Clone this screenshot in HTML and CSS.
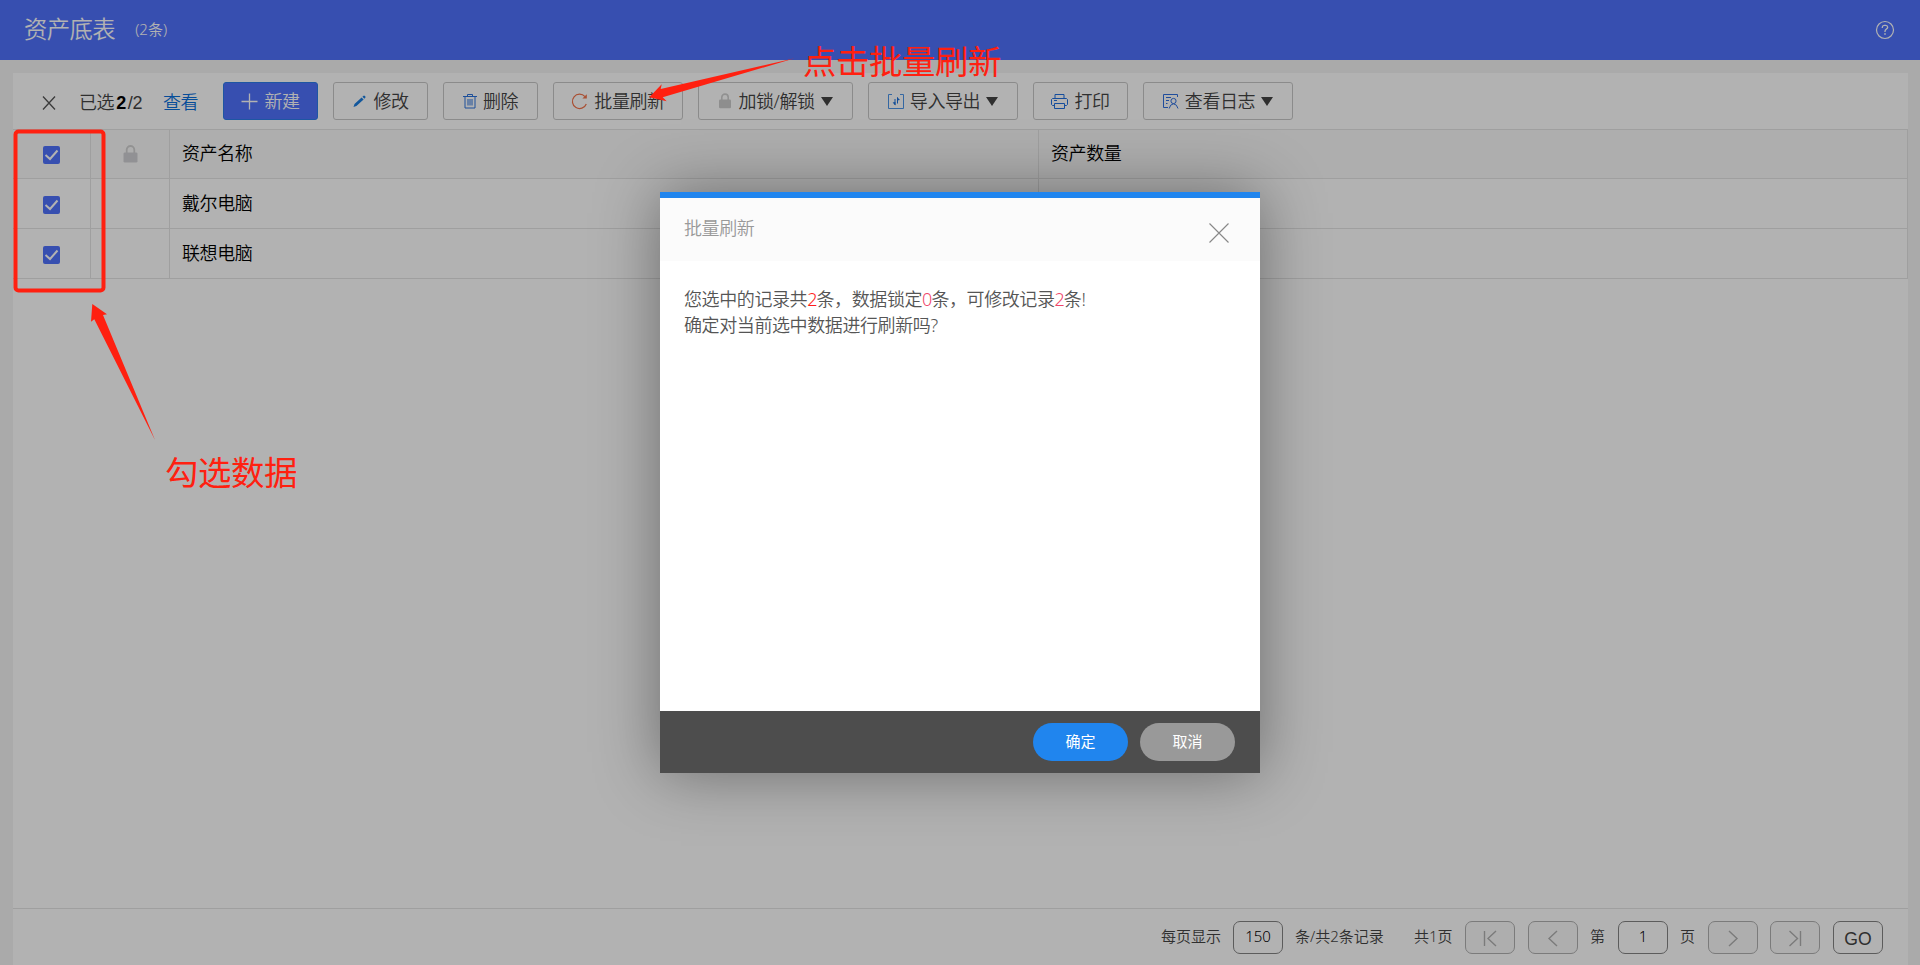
FILE: index.html
```html
<!DOCTYPE html>
<html lang="zh-CN">
<head>
    <meta charset="UTF-8">
    <meta name="viewport" content="width=device-width, initial-scale=1.0">
    <title>资产底表</title>
    <link rel="stylesheet" href="styles.css">
</head>
<body>
    <div class="page">
        <div class="header">
            <span class="title">资产底表</span>
            <span class="count">(2条)</span>
            <svg class="help" width="20" height="20" viewBox="0 0 20 20" fill="none" stroke="#fff">
                <circle cx="10" cy="10" r="8.5" stroke-width="1.2"/>
                <path d="M7.3 8V7.2A2 2 0 0 1 9.3 5.3H10.7A2 2 0 0 1 12.7 7.2C12.7 9 10 9.2 10 11.3V12" stroke-width="1.3"/>
                <path d="M10 13.2V14.8" stroke-width="1.6"/>
            </svg>
        </div>
        <div class="panel">
            <div class="toolbar">
                <svg class="clear" width="14" height="14" viewBox="0 0 14 14" fill="none" stroke="#555" stroke-width="1.3"><path d="M1 .5L13 13.5M13 .5L1 13.5"/></svg>
                <span class="selected">已选<b>2</b>/2</span>
                <a class="view">查看</a>
                <button class="btn btn-primary">
                    <svg width="17" height="17" viewBox="0 0 17 17" fill="none" stroke="#fff" stroke-width="1.3"><path d="M8.5 .5V16.5M.5 8.5H16.5"/></svg>
                    <span>新建</span>
                </button>
                <button class="btn">
                    <svg width="15" height="14" viewBox="0 0 15 14" fill="#1a7de0"><path d="M1.5 13L2.5 10L9.6 3.5L11.6 5.5L4.4 12ZM10.4 2.8L11.6 1.8Q12.2 1.4 12.8 1.9L13.4 2.5Q13.8 3 13.4 3.6L12.4 4.7Z"/></svg>
                    <span>修改</span>
                </button>
                <button class="btn">
                    <svg width="14" height="16" viewBox="0 0 14 16" fill="none" stroke="#2b73dd"><path d="M0 3.5H14M4.5 3.5V1.5H9.5V3.5M2 3.5V15H12V3.5M5 6V12.5M7 6V12.5M9 6V12.5"/></svg>
                    <span>删除</span>
                </button>
                <button class="btn btn-wide">
                    <svg width="17" height="17" viewBox="0 0 17 17" fill="none" stroke="#f3734a" stroke-width="1.2"><path d="M14 3.6A7.2 7.2 0 1 0 15.3 11"/><path d="M15.8 1.2V5.6H11.4Z" fill="#f3734a" stroke="none"/></svg>
                    <span>批量刷新</span>
                </button>
                <button class="btn btn-lock">
                    <svg width="14" height="16" viewBox="0 0 14 16"><path d="M3.8 7V4.3A3.2 3.2 0 0 1 10.2 4.3V7" fill="none" stroke="#d0d0d0" stroke-width="1.6"/><rect x="1" y="6.5" width="12" height="8.7" rx="1.2" fill="#ccc"/></svg>
                    <span>加锁/解锁</span>
                    <i class="caret"></i>
                </button>
                <button class="btn btn-menu">
                    <svg width="16" height="16" viewBox="0 0 16 16" fill="none" stroke="#4b94e8"><path d="M4 1.5H.5V15.5H4M12 1.5H15.5V15.5H12M4 15.5H12"/><path d="M7 12V6M9.5 4.5V10.5" stroke="#1a6fd8"/><path d="M7.4 12.5V9L4.6 9.5ZM9.1 4V7.5L12 7Z" fill="#1a6fd8" stroke="none"/></svg>
                    <span>导入导出</span>
                    <i class="caret"></i>
                </button>
                <button class="btn">
                    <svg width="17" height="17" viewBox="0 0 17 17" fill="none" stroke="#1f6fe0"><path d="M4 5.5V1.5H13V5.5M4 12.5H1.5L.5 11.5V6.5L1.5 5.5H15.5L16.5 6.5V11.5L15.5 12.5H13M3.5 10.5H13.5V15.5H3.5ZM3 7.5H6"/></svg>
                    <span>打印</span>
                </button>
                <button class="btn btn-menu">
                    <svg width="16" height="16" viewBox="0 0 16 16" fill="none" stroke="#2e6fe0"><path d="M14.5 4V1.5H.5V14.5H5M3 4.5H8M3 7.5H6M3 10.5H4.5"/><circle cx="10.5" cy="8" r="2.6"/><path d="M6.2 15.5Q7 11.2 10.5 10.8Q14 11.2 15 15.5"/></svg>
                    <span>查看日志</span>
                    <i class="caret"></i>
                </button>
            </div>
            <div class="grid">
                <div class="row row-head">
                    <div class="cell cell-check"><span class="checkbox"><svg width="17" height="18" viewBox="0 0 17 18" fill="none" stroke="#fff" stroke-width="2"><path d="M2.5 9L7 13L14.5 4.5"/></svg></span></div>
                    <div class="cell cell-lock"><svg width="15" height="18" viewBox="0 0 15 18"><path d="M3.7 8V4.8A3.8 3.8 0 0 1 11.3 4.8V8" fill="none" stroke="#d2d2d2" stroke-width="1.8"/><rect x="0.5" y="7.5" width="14" height="10" rx="1.3" fill="#d0d0d4"/></svg></div>
                    <div class="cell cell-name">资产名称</div>
                    <div class="cell cell-num">资产数量</div>
                </div>
                <div class="row">
                    <div class="cell cell-check"><span class="checkbox"><svg width="17" height="18" viewBox="0 0 17 18" fill="none" stroke="#fff" stroke-width="2"><path d="M2.5 9L7 13L14.5 4.5"/></svg></span></div>
                    <div class="cell cell-lock"></div>
                    <div class="cell cell-name">戴尔电脑</div>
                    <div class="cell cell-num"></div>
                </div>
                <div class="row">
                    <div class="cell cell-check"><span class="checkbox"><svg width="17" height="18" viewBox="0 0 17 18" fill="none" stroke="#fff" stroke-width="2"><path d="M2.5 9L7 13L14.5 4.5"/></svg></span></div>
                    <div class="cell cell-lock"></div>
                    <div class="cell cell-name">联想电脑</div>
                    <div class="cell cell-num"></div>
                </div>
            </div>
            <div class="pager">
                <span class="per-page">每页显示</span>
                <span class="box">150</span>
                <span class="records">条/共2条记录</span>
                <span class="pages">共1页</span>
                <span class="box box-off"><svg width="14" height="17" viewBox="0 0 14 17"><path d="M1.5 1V16M13 1L5 8.5L13 16"/></svg></span>
                <span class="box box-off box-prev"><svg width="14" height="17" viewBox="0 0 14 17"><path d="M11 1L3 8.5L11 16"/></svg></span>
                <span class="char">第</span>
                <span class="box">1</span>
                <span class="char">页</span>
                <span class="box box-off box-next"><svg width="14" height="17" viewBox="0 0 14 17"><path d="M3 1L11 8.5L3 16"/></svg></span>
                <span class="box box-off"><svg width="14" height="17" viewBox="0 0 14 17"><path d="M1.5 1L9.5 8.5L1.5 16M12.5 1V16"/></svg></span>
                <span class="box box-go">GO</span>
            </div>
        </div>
    </div>

    <div class="overlay">
        <div class="modal">
            <div class="modal-header">
                <span>批量刷新</span>
                <svg class="close" width="20" height="20" viewBox="0 0 20 20" fill="none" stroke="#888" stroke-width="1.1"><path d="M.5 .5L19.5 19.5M19.5 .5L.5 19.5"/></svg>
            </div>
            <div class="modal-body">
                <p>您选中的记录共<em>2</em>条，数据锁定<em class="soft">0</em>条，可修改记录<em class="soft">2</em>条!</p>
                <p>确定对当前选中数据进行刷新吗?</p>
            </div>
            <div class="modal-footer">
                <button class="pill pill-ok">确定</button>
                <button class="pill">取消</button>
            </div>
        </div>
    </div>

    <!-- red guide marks -->
    <svg class="marks" width="1920" height="965" viewBox="0 0 1920 965">
        <rect x="15.5" y="131.5" width="88" height="159" rx="3" fill="none" stroke="#ff2010" stroke-width="4"/>
        <path d="M649.3 97.3L661.7 84.3L660.7 89L794.7 58.2L662.7 97.3L666.7 101.3Z" fill="#ff2010"/>
        <path d="M92.3 304L107 314.3L103 315L155 440L94.3 319.3L91 321.7Z" fill="#ff2010"/>
    </svg>
    <div class="mark-text mark-refresh">点击批量刷新</div>
    <div class="mark-text mark-check">勾选数据</div>
</body>
</html>
```
FILE: styles.css
```css
* {
    box-sizing: border-box;
}
body {
    margin: 0;
    height: 965px;
    overflow: hidden;
    font-family: "Noto Sans", "Noto Sans CJK SC", sans-serif;
    font-size: 18px;
    font-weight: 350;
    letter-spacing: -0.4px;
    color: #000;
}
.page {
    height: 965px;
    background-color: #f4f4f4;
    display: flex;
    flex-direction: column;
}
.header {
    height: 60px;
    background-color: #5072fd;
    color: #fff;
    display: flex;
    align-items: center;
    padding: 0 25px 0 24px;
}
.title {
    font-size: 23.4px;
    line-height: 60px;
    margin-top: -2px;
    letter-spacing: -0.6px;
}
.count {
    font-size: 15px;
    margin: -3px 0 0 20px;
    letter-spacing: 0;
}
.help {
    margin-left: auto;
    margin-top: -1px;
}
.panel {
    margin: 13px 12px 0 13px;
    flex: 1;
    background-color: #fff;
    display: flex;
    flex-direction: column;
}
.toolbar {
    height: 56px;
    display: flex;
    align-items: center;
    gap: 15px;
    padding-left: 29px;
    color: #444;
}
.clear {
    margin-top: 3px;
}
.selected {
    width: 66px;
    margin-left: 8px;
    white-space: nowrap;
    font-family: "Liberation Sans", "Noto Sans CJK SC", sans-serif;
}
.selected b {
    color: #000;
    margin: 0 2px;
}
.view {
    width: 36px;
    margin: -1px 9px 0 3px;
    color: #0a6fdc;
    white-space: nowrap;
}
.btn {
    width: 95px;
    height: 38px;
    padding: 0;
    border: 1px solid #c8c8c8;
    border-radius: 3px;
    background-color: #fff;
    color: #444;
    font: inherit;
    letter-spacing: inherit;
    display: flex;
    justify-content: center;
    align-items: center;
    gap: 6px;
    white-space: nowrap;
}
.btn span {
    margin-top: -2px;
}
.btn-primary {
    background-color: #5072fd;
    border-color: #2b7bea;
    color: #fff;
}
.btn-wide {
    width: 130px;
}
.btn-lock {
    width: 155px;
}
.btn-menu {
    width: 150px;
}
.caret {
    border: 6.5px solid transparent;
    border-top: 9px solid #444;
    border-bottom: 0;
}
.row {
    height: 50px;
    display: flex;
    border-bottom: 1px solid #e4e4e4;
}
.row-head {
    background-color: #fafafa;
    border-top: 1px solid #e4e4e4;
}
.cell {
    border-right: 1px solid #e4e4e4;
    padding-bottom: 3px;
    display: flex;
    align-items: center;
}
.row-head .cell {
    padding-bottom: 5px;
}
.cell-check {
    width: 78px;
    padding-left: 30px;
}
.cell-lock {
    width: 79px;
    justify-content: center;
}
.cell-name {
    width: 869px;
    padding-left: 12px;
}
.cell-num {
    flex: 1;
    padding-left: 12px;
}
.checkbox {
    width: 17px;
    height: 18px;
    border-radius: 2px;
    background-color: #5072fd;
    margin-top: 6px;
}
.checkbox svg {
    display: block;
}
.cell-lock svg {
    margin-top: 4px;
}
.pager {
    height: 57px;
    margin-top: auto;
    border-top: 1px solid #e4e4e4;
    padding: 12px 25px 0 0;
    display: flex;
    justify-content: flex-end;
    font-size: 15px;
    line-height: 30px;
    letter-spacing: 0;
    color: #444;
    white-space: nowrap;
}
.per-page {
    margin-right: 12px;
}
.records {
    width: 119px;
    margin-left: 12px;
}
.pages {
    width: 51px;
}
.char {
    width: 40px;
    padding-right: 1px;
    text-align: center;
}
.box {
    width: 50px;
    height: 33px;
    border: 1px solid #858585;
    border-radius: 7px;
    color: #000;
    line-height: 29px;
    text-align: center;
}
.box-off {
    border-color: #b0b0b0;
    background-color: #fafafa;
}
.box-off svg {
    display: block;
    margin: 8px auto 0;
    fill: none;
    stroke: #b0b0b0;
    stroke-width: 1.4;
}
.box-prev {
    margin-left: 13px;
}
.box-next {
    margin-right: 12px;
}
.box-go {
    margin-left: 13px;
    color: #444;
    font-family: "Liberation Sans", sans-serif;
    font-size: 17.6px;
    line-height: 34px;
}
.overlay {
    position: absolute;
    top: 0;
    left: 0;
    width: 1920px;
    height: 965px;
    padding-top: 192px;
    background-color: rgba(0, 0, 0, 0.3);
}
.modal {
    width: 600px;
    height: 581px;
    margin: 0 auto;
    background-color: #fff;
    border-top: 6px solid #2085ee;
    box-shadow: 0 0 60px rgba(0, 0, 0, 0.4);
    display: flex;
    flex-direction: column;
}
.modal-header {
    height: 63px;
    padding: 0 31px 0 24px;
    background-color: #fbfbfb;
    color: #999;
    display: flex;
    justify-content: space-between;
    line-height: 60px;
}
.close {
    margin-top: 25px;
}
.modal-body {
    flex: 1;
    padding: 25px 24px;
    color: #555;
}
.modal-body p {
    margin: 0;
    line-height: 26px;
}
.modal-body em {
    font-style: normal;
    letter-spacing: -1px;
    color: #ff1a1a;
}
.modal-body .soft {
    color: #f0466a;
}
.modal-footer {
    height: 62px;
    padding: 12px 25px;
    background-color: #4d4d4d;
    display: flex;
    justify-content: flex-end;
    gap: 12px;
}
.pill {
    width: 95px;
    height: 38px;
    padding: 0 0 3px;
    border: none;
    border-radius: 19px;
    background-color: #999;
    color: #fff;
    font: inherit;
    font-size: 15px;
    font-weight: 400;
}
.pill-ok {
    background-color: #2085ee;
}
.marks {
    position: absolute;
    top: 0;
    left: 0;
}
.mark-text {
    position: absolute;
    color: #ff2010;
    font-size: 33.4px;
    font-weight: 400;
    line-height: 40px;
    white-space: nowrap;
}
.mark-refresh {
    left: 803px;
    top: 41px;
}
.mark-check {
    left: 165px;
    top: 452px;
}
```
